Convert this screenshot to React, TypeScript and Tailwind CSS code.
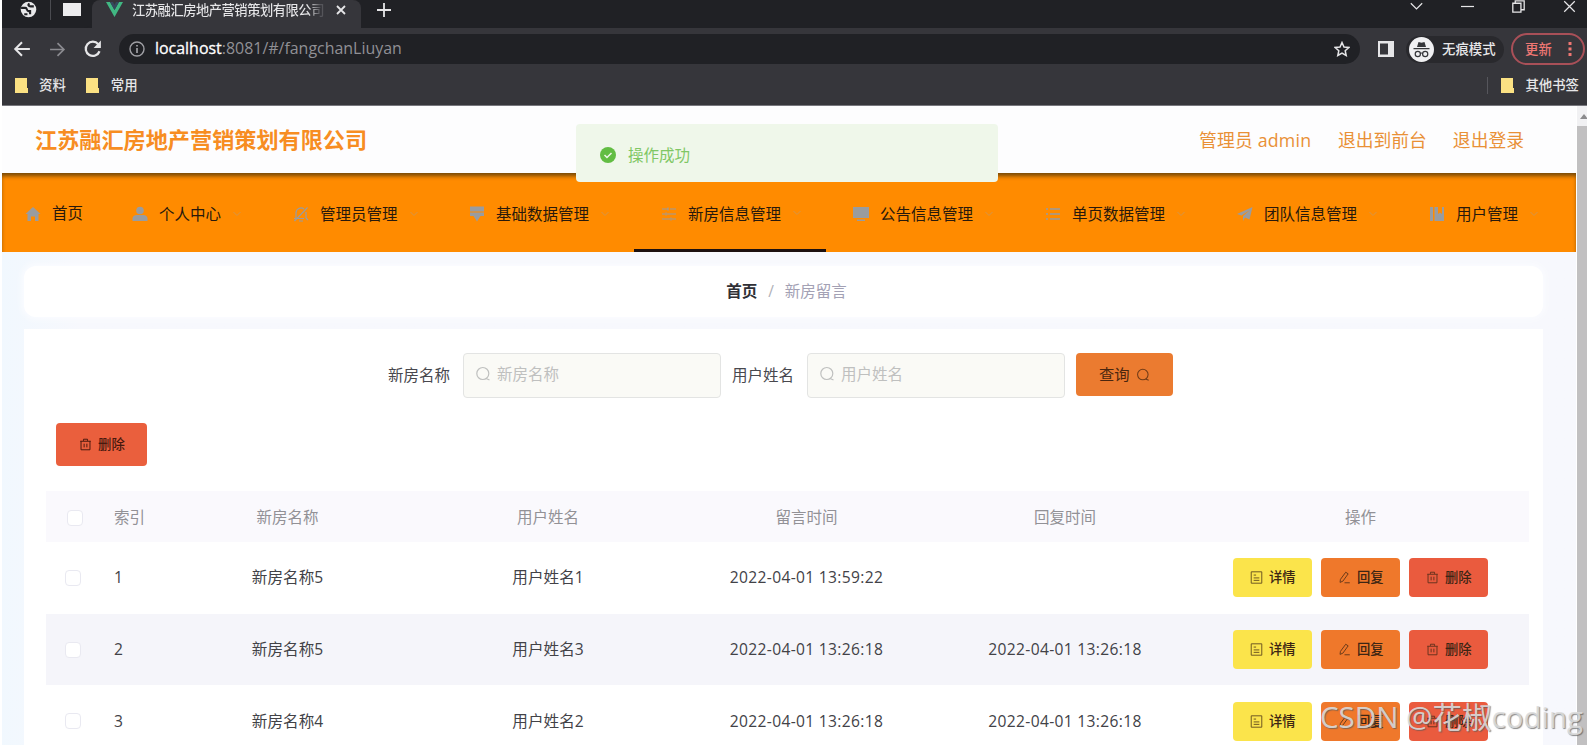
import type { ReactNode } from "react";

type IconProps = { children: ReactNode; className?: string; box?: string };

function Icon({ children, className = "size-4", box = "0 0 16 16" }: IconProps) {
  return (
    <svg viewBox={box} className={`shrink-0 ${className}`} fill="none" stroke="currentColor" strokeWidth="1.2">
      {children}
    </svg>
  );
}

const SearchIcon = ({ className }: { className: string }) => (
  <Icon className={className}>
    <circle cx="7.8" cy="7.5" r="6" />
    <path d="M11 12.500l3.500 1.500" />
  </Icon>
);

const TrashIcon = () => (
  <Icon className="size-[13px]">
    <path d="M1.500 4h13M2.500 4v10.500h11V4M5.500 3.500v-2h5v2M6.300 7v4.500M9.700 7v4.500" />
  </Icon>
);

const DetailIcon = () => (
  <Icon className="size-[13px]">
    <path d="M1.500 1h13v14h-13zM4.500 5h3M4.500 8.500h7M4.500 11.500h7" />
  </Icon>
);

const EditIcon = () => (
  <Icon className="size-[13px]">
    <path d="M9.500 1.500l3 2-6.500 9-3.500 1.500.5-3.700zM8 14.500h6.500" />
  </Icon>
);

const Folder = () => (
  <Icon className="h-[15px] w-[13px]" box="0 0 13 15">
    <path d="M0 0h12v10h1v5H0z" fill="#fbe183" stroke="none" />
  </Icon>
);

const menu = [
  {
    label: "首页",
    width: "w-[102px] pl-[23px]",
    icon: <path d="M8 1l7.500 7h-2v7H10v-4.500H6V15H2.500V8h-2z" fill="currentColor" stroke="none" />,
  },
  {
    label: "个人中心",
    width: "w-[161px] pl-[28px]",
    icon: (
      <g fill="currentColor" stroke="none">
        <circle cx="8" cy="4.500" r="3.800" />
        <path d="M.5 15v-2.500c0-2 2-3.500 4-3.500h7c2 0 4 1.500 4 3.500V15z" />
      </g>
    ),
  },
  {
    label: "管理员管理",
    width: "w-[177px] pl-[28px]",
    icon: <path d="M3 12V7a5 5 0 0 1 8-4M13 6v6M1 12.500h10M6 15h4M1.500 15L14.500 1.500M13 12l2 2" />,
  },
  {
    label: "基础数据管理",
    width: "w-[192px] pl-[27px]",
    icon: <path d="M1 .5h14v5H1zM1 6.500h14v3.500h-3.500L8 15.500 4.500 10H1z" fill="currentColor" stroke="none" />,
  },
  {
    label: "新房信息管理",
    width: "w-[192px] pl-[27px] border-b-[3px] border-b-[#1c1010]",
    icon: <path d="M1 3h6M9 3h6M1 8h3M6 8h9M1 13h8M11 13h4M7 1.500v3M5 6.500v3M10 11.500v3" />,
  },
  {
    label: "公告信息管理",
    width: "w-[192px] pl-[27px]",
    icon: <path d="M0 1h16v11H0zM4 13.500h8V15H4z" fill="currentColor" stroke="none" />,
  },
  {
    label: "单页数据管理",
    width: "w-[192px] pl-[27px]",
    icon: <path d="M1 3h2M5 3h10M1 8h2M5 8h10M1 13h2M5 13h10" strokeWidth="1.500" />,
  },
  {
    label: "团队信息管理",
    width: "w-[192px] pl-[27px]",
    icon: <path d="M0 8L15.500 1 12.500 13.500 8 11.500 6 15v-5l7-6-8.500 5.500z" fill="currentColor" stroke="none" />,
  },
  {
    label: "用户管理",
    width: "w-[172px] pl-[27px]",
    icon: <path d="M1 1h3v14H1zM5.500 1H9v7l2-1.500L13 8V1h2v14H5.500z" fill="currentColor" stroke="none" />,
  },
];

const rows = [
  { id: 1, house: "新房名称5", user: "用户姓名1", created: "2022-04-01 13:59:22", replied: "" },
  { id: 2, house: "新房名称5", user: "用户姓名3", created: "2022-04-01 13:26:18", replied: "2022-04-01 13:26:18" },
  { id: 3, house: "新房名称4", user: "用户姓名2", created: "2022-04-01 13:26:18", replied: "2022-04-01 13:26:18" },
];

const columns = "grid grid-cols-[57px_51px_267px_254px_263px_254px_337px] items-center";

function BrowserChrome() {
  return (
    <div className="h-[106px] border-b border-[#77777d] bg-[#36363b] text-[#e6e6e8]">
      <div className="flex h-7 bg-[#202125]">
        <div className="flex h-7 w-[90px] items-start rounded-br-lg bg-[#202125]">
          <Icon className="mt-[1px] ml-[18px] size-[17px]">
            <circle cx="8" cy="8" r="7.300" fill="#e8e8ea" stroke="none" />
            <path d="M1 6.500h4c2 0 1 3 3 3h1.500v3M9 2.500c-2 1-1 2.500 1 2.500h3M4 12.500h3" stroke="#202125" strokeWidth="2" />
          </Icon>
          <div className="ml-[13px] h-[20px] w-px bg-[#4a4b50]" />
          <div className="mt-[3px] ml-[12px] h-[13px] w-[18px] bg-[#ececee]" />
        </div>
        <div className="flex h-7 w-[269px] items-start rounded-t-lg bg-[#36363b]">
          <Icon className="mt-[2px] ml-[14px] h-[15px] w-[17px]" box="0 0 17 15">
            <path d="M0 0h4l4.500 8L13 0h4L8.500 15z" fill="#41b883" stroke="none" />
            <path d="M4 0h3l1.500 3L10 0h3L8.500 8z" fill="#35495e" stroke="none" />
          </Icon>
          <div className="ml-[9px] w-[192px] bg-gradient-to-r from-[#e6e6e8] from-92% to-[#55555a] to-98% bg-clip-text text-[13.3px] leading-[20px] font-medium tracking-[-0.5px] whitespace-nowrap text-transparent">
            江苏融汇房地产营销策划有限公司
          </div>
          <Icon className="mt-[5px] ml-[12px] size-[10px]" box="0 0 10 10">
            <path d="M1 1l8 8M9 1L1 9" strokeWidth="1.800" />
          </Icon>
        </div>
        <Icon className="mt-[3px] ml-[16px] size-[14px]" box="0 0 14 14">
          <path d="M7 0v14M0 7h14" strokeWidth="1.800" />
        </Icon>
        <div className="mr-[11px] ml-auto flex h-[13px] items-center gap-[38px]">
          <Icon className="size-[13px]"><path d="M1 4l7 7 7-7" strokeWidth="1.500" /></Icon>
          <Icon className="size-[13px]"><path d="M0 8h16" strokeWidth="1.500" /></Icon>
          <Icon className="size-[13px]"><path d="M1 4h10v11H1zM4 4V1h11v11h-4" strokeWidth="1.600" /></Icon>
          <Icon className="size-[13px]"><path d="M1.500 1.500l13 13M14.500 1.500l-13 13" strokeWidth="1.500" /></Icon>
        </div>
      </div>
      <div className="flex h-[42px] items-center">
        <Icon className="ml-[11px] size-[18px]"><path d="M15 8H2M8 2L2 8l6 6" strokeWidth="1.800" /></Icon>
        <Icon className="ml-[18px] size-[17px] text-[#8b8b90]"><path d="M1 8h13M8 2l6 6-6 6" strokeWidth="1.600" /></Icon>
        <Icon className="ml-[18px] size-[18px]">
          <path d="M13.800 10A6.300 6.300 0 1 1 12.700 3.800" strokeWidth="2" />
          <path d="M15 .5V7H8.500z" fill="currentColor" stroke="none" />
        </Icon>
        <div className="ml-[17px] flex h-[30px] w-[1241px] items-center rounded-full bg-[#202125] px-[10px]">
          <Icon className="size-[16px] text-[#a0a0a5]">
            <circle cx="8" cy="8" r="7" strokeWidth="1.400" />
            <path d="M8 7v5M8 4v1.600" strokeWidth="1.700" />
          </Icon>
          <div className="ml-[10px] text-[15.950px] text-[#909095]">
            <span className="text-white [-webkit-text-stroke:0.3px_white]">localhost</span>:8081/#/fangchanLiuyan
          </div>
          <Icon className="ml-auto size-[16px]">
            <path d="M8 1.500l2 4.500 4.800.5-3.600 3.200 1 4.800L8 12l-4.200 2.500 1-4.800L1.200 6.500 6 6z" strokeWidth="1.500" />
          </Icon>
        </div>
        <Icon className="ml-[18px] size-[16px]">
          <path d="M0 0h16v16H0zM2 2.500v11h8v-11z" fill="currentColor" fillRule="evenodd" stroke="none" />
        </Icon>
        <div className="ml-[12px] flex h-[27px] w-[98px] items-center rounded-full bg-[#29292d]">
          <Icon className="ml-[3px] size-[25px]" box="0 0 25 25">
            <circle cx="12.500" cy="12.500" r="12.500" fill="#f0f0f2" stroke="none" />
            <path d="M8 10l1.500-5 3 .8 3-.8L17 10z" fill="#35363a" stroke="none" />
            <path d="M4.500 11.700h16M11 16.500q1.500-1 3 0" stroke="#35363a" />
            <circle cx="8.800" cy="17" r="2.600" stroke="#35363a" />
            <circle cx="16.200" cy="17" r="2.600" stroke="#35363a" />
          </Icon>
          <span className="ml-[8px] text-[13.4px] font-medium">无痕模式</span>
        </div>
        <div className="ml-[7px] flex h-[32px] w-[74px] items-center rounded-full border-2 border-[#a95058] text-[#ef7773]">
          <span className="ml-[12px] text-[13.4px] font-medium">更新</span>
          <Icon className="ml-[16px] h-[16px] w-[4px]" box="0 0 4 16">
            <path d="M.5 1h3v3h-3zM.5 6.500h3v3h-3zM.5 12h3v3h-3z" fill="currentColor" stroke="none" />
          </Icon>
        </div>
      </div>
      <div className="flex h-[30px] items-center pl-[13px] text-[13.4px] font-medium">
        <Folder />
        <span className="ml-[11px]">资料</span>
        <span className="w-[20px]" />
        <Folder />
        <span className="ml-[12px]">常用</span>
        <span className="mr-[13px] ml-auto h-[17px] w-px bg-[#56565c]" />
        <Folder />
        <span className="mr-[8px] ml-[11px]">其他书签</span>
      </div>
    </div>
  );
}

function Toast() {
  return (
    <div className="absolute top-[124px] left-[576px] flex h-[58px] w-[422px] items-center rounded bg-[#eff7ea] pt-[3px] pl-[24px] text-[15.5px] text-[#80c765]">
      <Icon className="size-[16px]">
        <circle cx="8" cy="8" r="8" fill="#62bd43" stroke="none" />
        <path d="M4.500 8l2.500 2.500L11.500 6" stroke="#eff7ea" strokeWidth="1.500" />
      </Icon>
      <span className="mt-[2px] ml-[12px]">操作成功</span>
    </div>
  );
}

function SearchInput({ label }: { label: string }) {
  return (
    <div className="flex h-[45px] w-[258px] items-center rounded-sm border border-[#e3e4e3] bg-[#fafaf6] pb-px pl-[11px] text-[15.5px] text-[#bfc0bf]">
      <SearchIcon className="mb-[3px] size-[16px]" />
      <span className="ml-[6px]">{label}</span>
    </div>
  );
}

function ActionButton({ label, color, icon }: { label: string; color: string; icon: ReactNode }) {
  return (
    <button type="button" className={`flex h-[39px] w-[79px] items-center rounded pl-[17px] text-[13.3px] font-medium text-[#3c2514] ${color}`}>
      <span className="opacity-75">{icon}</span>
      <span className="mt-px ml-[6px]">{label}</span>
    </button>
  );
}

const Checkbox = ({ className = "" }: { className?: string }) => (
  <div className={`size-[16px] rounded-sm border border-[#e9e9f1] bg-white ${className}`} />
);

export default function App() {
  return (
    <div className="relative h-[745px] w-[1587px] overflow-hidden bg-white pl-[2px] font-['Open_Sans','Noto_Sans_CJK_SC',sans-serif]">
      <BrowserChrome />
      <div className="flex h-[639px]">
        <div className="w-[1574px] bg-gradient-to-r from-[#f1f8fe] to-[#f7f8fd] to-5%">
          <header className="flex h-[67px] items-center bg-[#fdfdfe] pt-px pl-[33px] text-[#f78d22]">
            <h1 className="text-[22.15px] font-bold">江苏融汇房地产营销策划有限公司</h1>
            <div className="mr-[52px] ml-auto flex gap-[26px] text-[17.8px] text-[#e99036]">
              <span className="w-[113px] tracking-[0.2px] whitespace-nowrap">管理员 admin</span>
              <span>退出到前台</span>
              <span>退出登录</span>
            </div>
          </header>
          <nav className="flex h-[79px] bg-[#ff8b00] shadow-[inset_0_4px_4px_-1px_rgba(80,55,10,0.8)]">
            {menu.map((item, i) => (
              <div key={item.label} className={`flex h-[79px] shrink-0 items-center border-t-[3px] border-t-transparent text-[15.5px] text-[#28190c] ${item.width}`}>
                <Icon className={`size-[16px] text-[#999ca0] ${i === 4 ? "mt-[3px]" : ""}`}>{item.icon}</Icon>
                <span className={`ml-[11px] whitespace-nowrap ${i === 4 ? "mt-[4px]" : i > 0 ? "mt-px" : "-mt-px"}`}>{item.label}</span>
                {i > 0 && (
                  <Icon className="ml-[12px] size-[8px] text-[#d4954a]"><path d="M1 4l7 7 7-7" strokeWidth="2" /></Icon>
                )}
              </div>
            ))}
          </nav>
          <div className="mt-[14px] ml-[22px] flex h-[51px] w-[1519px] items-center justify-center rounded-xl bg-white pl-[6px] text-[15.5px] shadow-[0_0_6px_2px_#fbfcff]">
            <span className="font-bold text-[#303036]">首页</span>
            <span className="mx-[11px] text-[#b0b1b8]">/</span>
            <span className="text-[#a3a1b4]">新房留言</span>
          </div>
          <main className="mt-[12px] ml-[22px] h-[416px] w-[1519px] bg-white pt-[24px] pl-[22px]">
            <div className="flex h-[45px] items-center pl-[342px] text-[15.5px] text-[#48484e]">
              <span className="mr-[13px]">新房名称</span>
              <SearchInput label="新房名称" />
              <span className="mr-[13px] ml-[11px]">用户姓名</span>
              <SearchInput label="用户姓名" />
              <button type="button" className="mb-[2px] ml-[11px] flex h-[43px] w-[97px] items-center rounded bg-[#eb7b30] pl-[23px] text-[15.3px] text-[#49260f]">
                查询
                <SearchIcon className="ml-[6px] size-[14px] opacity-75" />
              </button>
            </div>
            <button type="button" className="mt-[25px] ml-[10px] flex h-[43px] w-[91px] items-center rounded bg-[#ea5f3d] pl-[23px] text-[13.4px] font-medium text-[#48190e]">
              <TrashIcon />
              <span className="ml-[6px]">删除</span>
            </button>
            <div className="mt-[25px] w-[1483px]">
              <div className={`h-[51px] bg-[#faf9fd] pt-[2px] text-[15.5px] text-[#929196] ${columns}`}>
                <Checkbox className="ml-[21px]" />
                <span className="ml-[11px]">索引</span>
                <span className="text-center">新房名称</span>
                <span className="text-center">用户姓名</span>
                <span className="text-center">留言时间</span>
                <span className="text-center">回复时间</span>
                <span className="text-center">操作</span>
              </div>
              {rows.map((row, i) => (
                <div key={row.id} className={`h-[71.7px] text-[15.6px] text-[#424247] ${columns} ${i % 2 ? "bg-[#f5f5fa]" : "bg-white"}`}>
                  <Checkbox className="ml-[19px]" />
                  <span className="ml-[11px]">{row.id}</span>
                  <span className="text-center">{row.house}</span>
                  <span className="text-center">{row.user}</span>
                  <span className="text-center tracking-[0.33px]">{row.created}</span>
                  <span className="text-center tracking-[0.33px]">{row.replied}</span>
                  <div className="flex justify-center gap-[9px]">
                    <ActionButton label="详情" color="bg-[#fbe44b]" icon={<DetailIcon />} />
                    <ActionButton label="回复" color="bg-[#ef782b]" icon={<EditIcon />} />
                    <ActionButton label="删除" color="bg-[#ea5b3e]" icon={<TrashIcon />} />
                  </div>
                </div>
              ))}
            </div>
          </main>
        </div>
        <div className="ml-auto w-[10px] bg-[#f1f1f3]">
          <Icon className="mt-[8px] h-[5px] w-[10px]" box="0 0 10 5">
            <path d="M3 5l4-5 4 5z" fill="#8b8b8d" stroke="none" />
          </Icon>
          <div className="mt-[7px] h-[620px] bg-[#c1c0c1]" />
        </div>
      </div>
      <Toast />
      <div className="absolute right-[4px] bottom-[6px] text-[29.5px] leading-[44px] whitespace-nowrap text-[#dcdcdc]/90 [text-shadow:1px_1px_1px_rgba(90,90,90,0.7)]">
        CSDN @花椒coding
      </div>
    </div>
  );
}
